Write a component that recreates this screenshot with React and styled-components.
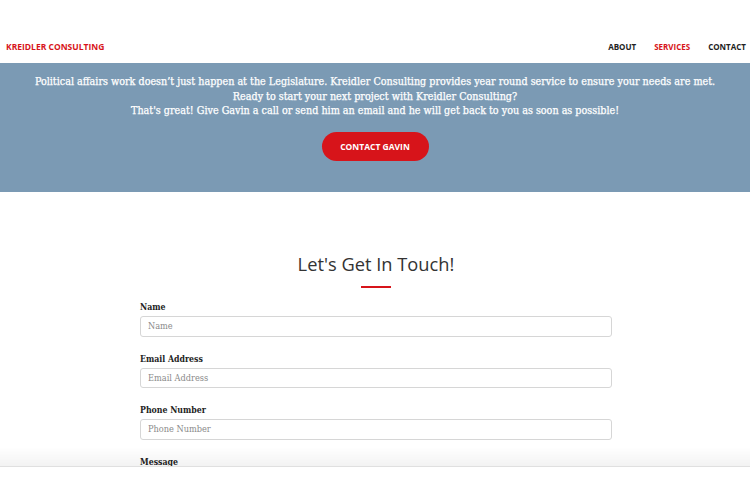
import React from "react";
import styled, { createGlobalStyle } from "styled-components";

const Global = createGlobalStyle`
  html, body { margin: 0; padding: 0; background: #fff; }
  body { font-family: "Open Sans", sans-serif; overflow: hidden; }
  * { box-sizing: border-box; }
`;

const serif = `"DejaVu Serif Condensed", "DejaVu Serif", serif`;

const Header = styled.header`
  height: 63px;
  display: flex;
  align-items: flex-end;
  justify-content: space-between;
  padding: 0 4px 11px 6px;
`;

const Logo = styled.a`
  color: #d7141a;
  font-weight: 700;
  font-size: 8.5px;
  text-decoration: none;
`;

const Nav = styled.nav`
  display: flex;
  gap: 18px;
`;

const NavLink = styled.a`
  color: ${(p) => (p.$active ? "#d7141a" : "#222")};
  font-weight: 700;
  font-size: 8px;
  text-decoration: none;
`;

const Hero = styled.section`
  background: #7b9ab4;
  height: 129px;
  display: flex;
  flex-direction: column;
  align-items: center;
  padding-top: 12px;
`;

const HeroText = styled.p`
  margin: 0;
  color: #fff;
  font-family: ${serif};
  font-stretch: condensed;
  font-size: 10.7px;
  line-height: 14.6px;
  text-align: center;
  -webkit-text-stroke: 0.25px #fff;
`;

const Button = styled.a`
  margin-top: 13px;
  width: 107px;
  height: 29px;
  border-radius: 15px;
  background: #d7141a;
  color: #fff;
  font-weight: 700;
  font-size: 8.5px;
  display: flex;
  align-items: center;
  justify-content: center;
  text-decoration: none;
`;

const Contact = styled.section`
  display: flex;
  flex-direction: column;
  align-items: center;
  padding: 58px 0 0 2px;
`;

const Title = styled.h2`
  margin: 0;
  font-weight: 400;
  font-size: 18.3px;
  line-height: 28px;
  color: #333;
`;

const Rule = styled.div`
  width: 30px;
  height: 2px;
  background: #d7141a;
  margin-top: 8px;
`;

const Form = styled.form`
  width: 472px;
  margin-top: 12px;
  display: flex;
  flex-direction: column;
  gap: 15px;
`;

const Field = styled.div`
  display: flex;
  flex-direction: column;
  gap: 2px;
`;

const Label = styled.label`
  font-family: ${serif};
  font-stretch: condensed;
  font-weight: 700;
  font-size: 8.7px;
  line-height: 14px;
  color: #222;
`;

const Input = styled.input`
  height: 20.5px;
  border: 1px solid #d6d6d6;
  border-radius: 3px;
  padding: 0 7px;
  font-family: ${serif};
  font-stretch: condensed;
  font-size: 9.15px;
  color: #333;
  outline: none;
  &::placeholder { color: #8a8a8a; }
`;

const BottomFade = styled.div`
  position: fixed;
  left: 0;
  right: 0;
  bottom: 0;
  height: 34px;
  background: #fff;
  border-top: 1px solid #ececec;
  &::before {
    content: "";
    position: absolute;
    left: 0;
    right: 0;
    bottom: 100%;
    height: 20px;
    background: linear-gradient(to bottom, rgba(0,0,0,0), rgba(0,0,0,0.05));
  }
`;

const fields = ["Name", "Email Address", "Phone Number"];

export default function App() {
  return (
    <>
      <Global />
      <Header>
        <Logo href="#">KREIDLER CONSULTING</Logo>
        <Nav>
          <NavLink href="#">ABOUT</NavLink>
          <NavLink href="#" $active>SERVICES</NavLink>
          <NavLink href="#">CONTACT</NavLink>
        </Nav>
      </Header>
      <Hero>
        <HeroText>
          Political affairs work doesn’t just happen at the Legislature. Kreidler Consulting provides year round service to ensure your needs are met.
          <br />
          Ready to start your next project with Kreidler Consulting?
          <br />
          That's great! Give Gavin a call or send him an email and he will get back to you as soon as possible!
        </HeroText>
        <Button href="#">CONTACT GAVIN</Button>
      </Hero>
      <Contact>
        <Title>Let's Get In Touch!</Title>
        <Rule />
        <Form>
          {fields.map((f) => (
            <Field key={f}>
              <Label>{f}</Label>
              <Input placeholder={f} />
            </Field>
          ))}
          <Field>
            <Label>Message</Label>
          </Field>
        </Form>
      </Contact>
      <BottomFade />
    </>
  );
}
